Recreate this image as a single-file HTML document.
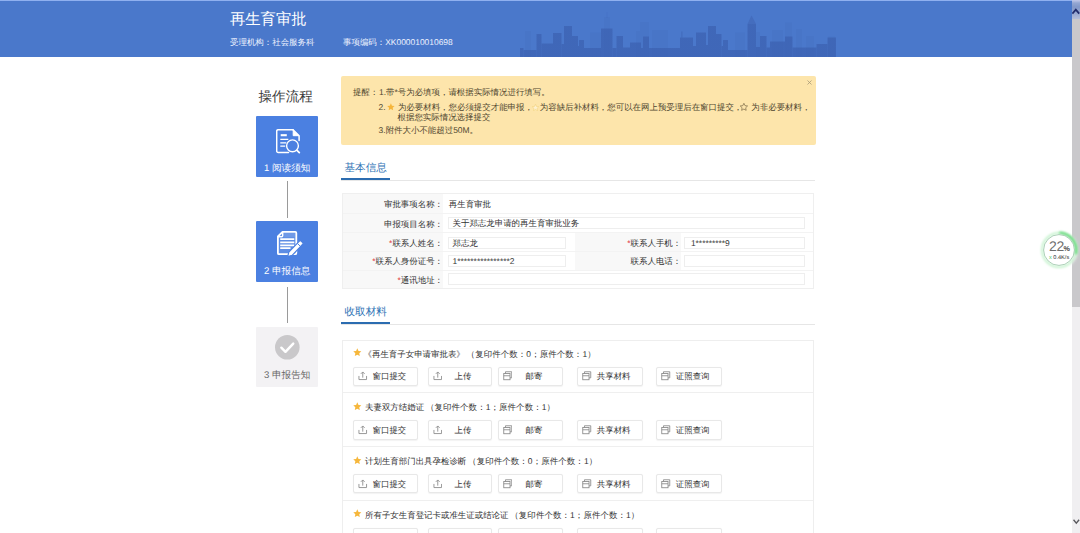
<!DOCTYPE html>
<html>
<head>
<meta charset="utf-8">
<title>再生育审批</title>
<style>
*{box-sizing:border-box;margin:0;padding:0}
html,body{width:1080px;height:533px;overflow:hidden;background:#fff}
body{position:relative;text-rendering:geometricPrecision;font-family:"Liberation Sans",sans-serif;color:#333;font-size:8.45px;line-height:10px}
.abs{position:absolute;white-space:nowrap}
/* header */
#hdr{position:absolute;left:0;top:0;width:1072px;height:57px;background:#4a78cb;border-top:1px solid #8fb0f0}
#hdr .t{position:absolute;left:230px;top:9px;font-size:15.3px;line-height:20px;color:#fff}
#hdr .s{position:absolute;top:34.5px;font-size:8.45px;line-height:12px;color:#eef3ff}
#sky{position:absolute;left:0;top:-1px}
/* scrollbar */
#sb{position:absolute;left:1072px;top:0;width:8px;height:533px;background:#f0eff1}
#sb .up{position:absolute;left:0;top:0;width:8px;height:18.5px;background:linear-gradient(#c3c9ea 0,#93a6d2 3px,#8197c8 7px,#96a7d0 13px,#b3bcd8 18.500px)}
#sb .th{position:absolute;left:0;top:18.5px;width:8px;height:288.5px;background:#c9c8cb}
/* steps */
.step{position:absolute;left:256.3px;width:61.7px;height:61.3px;background:#4b80e1;color:#fff;border-radius:1px}
.step .lb{position:absolute;left:0;width:61.7px;text-align:center;font-size:9.6px;line-height:12px;white-space:nowrap}
.step .ic{position:absolute}
.conn{position:absolute;left:287px;width:1px;background:#9a9a9a}
/* alert */
#al{position:absolute;left:341px;top:76px;width:475px;height:69px;background:#fde5ab;border-radius:2px;color:#4f452f}
#al .ln{position:absolute;white-space:nowrap;line-height:10px}
#al .st{display:inline-block;vertical-align:-1.2px}
/* section titles */
.sec{position:absolute;left:344.5px;font-size:10.6px;line-height:14px;color:#2f73b5;white-space:nowrap}
.ul{position:absolute;left:341px;width:48.5px;height:2.5px;background:#2b6cb0}
.gl{position:absolute;left:341px;width:474px;height:1px;background:#e6e6e6}
/* form */
#fm{position:absolute;left:342px;top:193px;width:472px;height:96px;border:1px solid #efefef;background:#fff}
.lc{position:absolute;background:#f8f8f8}
.lab{position:absolute;text-align:right;white-space:nowrap;color:#333}
.lab i{color:#e03030;font-style:normal}
.inp{position:absolute;height:12.2px;border:1px solid #eeeeee;background:#fff;padding-left:4px;line-height:10px;white-space:nowrap;color:#333}
.hl{position:absolute;left:0;height:1px;background:#f3f3f3}
/* materials */
#mt{position:absolute;left:342px;top:339.5px;width:472px;height:200px;border:1px solid #eeeeee;border-bottom:0;background:#fff}
.mi{position:absolute;left:0;width:470px;height:52.7px;border-bottom:1px solid #efefef}
.mi .ms{position:absolute;left:10px;top:7.6px}
.mi .tt{position:absolute;top:7.1px;line-height:12px;white-space:nowrap;color:#333}
.mi .pc{letter-spacing:.1px;margin-left:-.5px}
.btn{position:absolute;top:26.2px;height:19.1px;border:1px solid #e8e8e8;border-radius:2px;background:#fff;box-shadow:0 .5px 1px rgba(0,0,0,.05)}
.btn span{position:absolute;top:3.6px;line-height:10px;white-space:nowrap;color:#333}
.btn svg{position:absolute;top:3.8px}
/* widget */
#wg{position:absolute;left:1036.800px;top:228px;width:44px;height:44px}
#wg .n{position:absolute;left:12.100px;top:10.900px;font-size:14px;line-height:14px;color:#6e6e6e;letter-spacing:-.3px}
#wg .p{position:absolute;left:26.800px;top:16.700px;font-size:7.200px;line-height:8px;color:#444;font-weight:bold}
#wg .k{position:absolute;left:12.200px;top:27.300px;font-size:5.600px;line-height:6px;color:#333;white-space:nowrap}
</style>
</head>
<body>
<div id="hdr">
  <svg id="sky" width="1072" height="57" viewBox="0 0 1072 57"><defs><linearGradient id="sg" x1="0" y1="0" x2="0" y2="1" gradientUnits="userSpaceOnUse"><stop offset=".4" stop-color="#3f67b8" stop-opacity=".3"/><stop offset="1" stop-color="#3b60b0" stop-opacity=".7"/></linearGradient></defs><rect x="525" y="31" width="6" height="26" fill="#3a5fb0" fill-opacity=".12"/><rect x="590" y="32.5" width="11" height="24.5" fill="#3a5fb0" fill-opacity=".12"/><rect x="604" y="17" width="6" height="40" fill="#3a5fb0" fill-opacity=".12"/><rect x="636" y="31" width="4" height="26" fill="#3a5fb0" fill-opacity=".12"/><rect x="640" y="22" width="9" height="35" fill="#3a5fb0" fill-opacity=".12"/><rect x="652" y="30" width="16" height="27" fill="#3a5fb0" fill-opacity=".12"/><rect x="735" y="32.5" width="10" height="24.5" fill="#3a5fb0" fill-opacity=".12"/><rect x="756" y="32" width="4" height="25" fill="#3a5fb0" fill-opacity=".12"/><rect x="772" y="30" width="11" height="27" fill="#3a5fb0" fill-opacity=".12"/><rect x="785" y="22.5" width="7" height="34.5" fill="#3a5fb0" fill-opacity=".12"/><rect x="796" y="29" width="6" height="28" fill="#3a5fb0" fill-opacity=".12"/><rect x="806" y="36" width="8" height="21" fill="#3a5fb0" fill-opacity=".12"/><rect x="828" y="36.5" width="7" height="20.5" fill="#3a5fb0" fill-opacity=".12"/><rect x="520" y="48" width="3.5" height="9" fill="url(#sg)"/><rect x="523.5" y="50" width="13.0" height="7" fill="url(#sg)"/><rect x="536.5" y="34" width="5.0" height="23" fill="url(#sg)"/><rect x="541.5" y="43.5" width="11.5" height="13.5" fill="url(#sg)"/><rect x="553" y="33" width="8.5" height="24" fill="url(#sg)"/><rect x="561.5" y="44" width="2.5" height="13" fill="url(#sg)"/><rect x="564" y="26" width="8" height="31" fill="url(#sg)"/><rect x="572" y="36" width="6" height="21" fill="url(#sg)"/><rect x="578" y="46" width="1" height="11" fill="url(#sg)"/><rect x="579" y="40" width="5" height="17" fill="url(#sg)"/><rect x="584" y="48" width="17" height="9" fill="url(#sg)"/><rect x="601" y="28.5" width="11.5" height="28.5" fill="url(#sg)"/><rect x="612.5" y="48" width="4.0" height="9" fill="url(#sg)"/><rect x="616.5" y="36" width="6.5" height="21" fill="url(#sg)"/><rect x="623" y="47.5" width="7" height="9.5" fill="url(#sg)"/><rect x="630" y="42.5" width="11" height="14.5" fill="url(#sg)"/><rect x="641" y="48" width="2" height="9" fill="url(#sg)"/><rect x="643" y="36.5" width="6" height="20.5" fill="url(#sg)"/><rect x="649" y="48" width="31" height="9" fill="url(#sg)"/><rect x="680" y="37.5" width="13" height="19.5" fill="url(#sg)"/><rect x="693" y="46" width="3" height="11" fill="url(#sg)"/><rect x="696" y="32.5" width="10" height="24.5" fill="url(#sg)"/><rect x="706" y="45" width="2" height="12" fill="url(#sg)"/><rect x="708" y="26" width="8" height="31" fill="url(#sg)"/><rect x="716" y="34" width="5.5" height="23" fill="url(#sg)"/><rect x="721.5" y="46" width="1.5" height="11" fill="url(#sg)"/><rect x="723" y="40" width="5" height="17" fill="url(#sg)"/><rect x="728" y="50" width="19.5" height="7" fill="url(#sg)"/><rect x="747.5" y="24" width="8.5" height="33" fill="url(#sg)"/><rect x="756" y="47" width="4" height="10" fill="url(#sg)"/><rect x="760" y="36" width="6.5" height="21" fill="url(#sg)"/><rect x="766.5" y="47.5" width="3.5" height="9.5" fill="url(#sg)"/><rect x="770" y="41.5" width="15" height="15.5" fill="url(#sg)"/><rect x="785" y="36.5" width="7.5" height="20.5" fill="url(#sg)"/><rect x="792.5" y="47.5" width="24.0" height="9.5" fill="url(#sg)"/><rect x="816.5" y="44" width="11.0" height="13" fill="url(#sg)"/><rect x="827.5" y="37.5" width="8.5" height="19.5" fill="url(#sg)"/><polygon points="747.5,24 751.5,15.5 756,24" fill="#3d62b2" fill-opacity=".5"/><rect x="681.3" y="31.5" width="1.2" height="6" fill="#3d62b2" fill-opacity=".5"/><rect x="606.5" y="12" width="1" height="6" fill="#3a5fb0" fill-opacity=".16"/></svg>
  <div class="t">再生育审批</div>
  <div class="s" style="left:230px">受理机构：社会服务科</div>
  <div class="s" style="left:343px">事项编码：XK000010010698</div>
</div>
<div id="sb"><div class="up"></div><div class="th"></div>
<svg class="abs" style="left:.3px;top:7.500px" width="8" height="7" viewBox="0 0 8 7"><path d="M.4 5.600l3.400-4 3.400 4" fill="none" stroke="#222c6c" stroke-width="1.700"/></svg>
<svg class="abs" style="left:.8px;top:519.300px" width="7" height="6" viewBox="0 0 7 6"><path d="M.5 .8l2.800 3.300 2.800-3.300" fill="none" stroke="#5a5a5e" stroke-width="1.400"/></svg>
</div>

<div class="abs" style="left:258.5px;top:86.5px;font-size:13.6px;line-height:20px;color:#3a3a3a">操作流程</div>
<div class="step" style="top:116px"><svg class="ic" style="left:19.7px;top:13px" width="25" height="25" viewBox="0 0 25 25" fill="none" stroke="#fff" stroke-linecap="round" stroke-linejoin="round"><path d="M17 .7H2.200A1.500 1.500 0 0 0 .7 2.200V21.900A1.500 1.500 0 0 0 2.200 23.400H12.500" stroke-width="1.500"/><path d="M17 .7L23.100 6.900V11.500" stroke-width="1.500"/><path d="M17.200 1.400V6.700H22.500z" fill="#fff" stroke-width="1"/><path d="M4.700 6.200H10.800" stroke-width="2.100" stroke-linecap="butt"/><path d="M4.300 10.400H12.300M4.300 13.900H10.300M4.300 17.200H9.200" stroke-width="1.200" stroke-linecap="butt"/><circle cx="16.500" cy="16.800" r="5.900" fill="#4b80e1" stroke-width="1.400"/><path d="M21 21.300L23.300 23.600" stroke-width="1.800"/></svg><div class="lb" style="top:46.6px">1 阅读须知</div></div>
<div class="conn" style="top:181px;height:37px"></div>
<div class="step" style="top:221.3px;height:60.8px"><svg class="ic" style="left:20.7px;top:9.700px" width="27" height="28" viewBox="0 0 27 28" stroke-linejoin="round"><path d="M5.500 .9H18.300a1 1 0 0 1 1 1V22.200a1 1 0 0 1-1 1H1.900a1 1 0 0 1-1-1V5.500z" fill="#fff" fill-opacity=".1" stroke="#fff" stroke-width="1.800"/><path d="M5.700 1V4.700a1 1 0 0 1-1 1H1" fill="none" stroke="#fff" stroke-width="1.500"/><path d="M7.200 2H18V6.300H7.200z" fill="#fff" fill-opacity=".12"/><path d="M3.200 8.200H17.300M3.200 11.300H17.300M3.200 14.300H17.300M3.200 17.200H13.500" stroke="#fff" stroke-width="1.700" fill="none"/><g transform="translate(10.700,25.600) rotate(-46.200)"><path d="M0 0L4-2.300H19.300a1.200 1.200 0 0 1 1.200 1.200V1.100a1.200 1.200 0 0 1-1.200 1.200H4z" fill="#fff" stroke="#4b80e1" stroke-width="1.200"/><path d="M16.200-2.300V2.300" stroke="#4b80e1" stroke-width=".9"/></g></svg><div class="lb" style="top:44.8px">2 申报信息</div></div>
<div class="conn" style="top:286.5px;height:36px"></div>
<div class="step" style="top:326.8px;height:60.5px;background:#f3f2f4;color:#666"><svg class="ic" style="left:18.7px;top:8.5px" width="24.6" height="24.6" viewBox="0 0 24 24"><circle cx="12" cy="12" r="12" fill="#c9c8ca"/><path d="M6.2 12.4l4 4 7.6-8" fill="none" stroke="#fff" stroke-width="2.4" stroke-linecap="round" stroke-linejoin="round"/></svg><div class="lb" style="top:43.7px">3 申报告知</div></div>

<div id="al">
<div class="ln" style="left:12px;top:11.3px">提醒：</div>
<div class="ln" style="left:38px;top:11.3px">1.带*号为必填项，请根据实际情况进行填写。</div>
<div class="ln" style="left:37.6px;top:25.6px">2.<svg class="st" style="margin:0 3.3px 0 1.2px" width="7.8" height="7.8" viewBox="0 0 10 10"><polygon points="5,0.4 6.4,3.4 9.7,3.8 7.3,6.1 7.9,9.4 5,7.8 2.1,9.4 2.7,6.1 0.3,3.8 3.6,3.4" fill="#f5b53a" stroke="none" stroke-width=".8" stroke-linejoin="round"/></svg>为必要材料，您必须提交才能申报，<svg class="st" style="margin:0 .85px 0 -1px" width="7" height="7" viewBox="0 0 10 10"><polygon points="5,0.4 6.4,3.4 9.7,3.8 7.3,6.1 7.9,9.4 5,7.8 2.1,9.4 2.7,6.1 0.3,3.8 3.6,3.4" fill="#fdf0cf" stroke="#f3d27a" stroke-width=".8" stroke-linejoin="round"/></svg>为容缺后补材料，您可以在网上预受理后在窗口提交，<svg class="st" style="margin:0 3.3px 0 -2px" width="7.8" height="7.8" viewBox="0 0 10 10"><polygon points="5,0.4 6.4,3.4 9.7,3.8 7.3,6.1 7.9,9.4 5,7.8 2.1,9.4 2.7,6.1 0.3,3.8 3.6,3.4" fill="none" stroke="#6a5a3a" stroke-width=".8" stroke-linejoin="round"/></svg>为非必要材料，</div>
<div class="ln" style="left:56.5px;top:35.6px">根据您实际情况选择提交</div>
<div class="ln" style="left:37.6px;top:49.4px">3.附件大小不能超过50M。</div>
<svg class="abs" style="left:465.5px;top:4px" width="5" height="5" viewBox="0 0 5 5"><path d="M.5 .5l4 4M4.500 .5l-4 4" stroke="#a89a78" stroke-width=".8" fill="none"/></svg>
</div>

<div class="sec" style="top:160.7px">基本信息</div>
<div class="gl" style="top:180px"></div>
<div class="ul" style="top:177.5px"></div>
<div id="fm">
<div class="lc" style="left:0px;top:0px;width:99.5px;height:94px"></div>
<div class="lc" style="left:231.5px;top:38.5px;width:106.7px;height:38.7px"></div>
<div class="hl" style="top:18.8px;width:470px"></div>
<div class="hl" style="top:38px;width:470px"></div>
<div class="hl" style="top:57px;width:470px"></div>
<div class="hl" style="top:76px;width:470px"></div>
<div class="lab" style="left:0;width:100px;top:4.55px">审批事项名称：</div>
<div class="lab" style="left:0;width:100px;top:24.55px">申报项目名称：</div>
<div class="lab" style="left:0;width:100px;top:43.8px"><i>*</i>联系人姓名：</div>
<div class="lab" style="left:0;width:100px;top:61.55px"><i>*</i>联系人身份证号：</div>
<div class="lab" style="left:0;width:100px;top:80.8px"><i>*</i>通讯地址：</div>
<div class="lab" style="left:231.5px;width:106.70000000000005px;top:43.8px"><i>*</i>联系人手机：</div>
<div class="lab" style="left:231.5px;width:106.70000000000005px;top:61.55px">联系人电话：</div>
<div class="abs" style="left:105.75px;top:4.55px">再生育审批</div>
<div class="inp" style="left:104.5px;top:23.3px;width:357.5px">关于郑志龙申请的再生育审批业务</div>
<div class="inp" style="left:104.5px;top:43.0px;width:118.8px">郑志龙</div>
<div class="inp" style="left:341.2px;top:43.0px;width:120.8px"><span class="m" style="margin-left:1.7px">1*********9</span></div>
<div class="inp" style="left:104.5px;top:60.9px;width:118.8px"><span class="m">1****************2</span></div>
<div class="inp" style="left:341.2px;top:60.9px;width:120.8px"></div>
<div class="inp" style="left:104.5px;top:79.3px;width:357.5px"></div>
</div>

<div class="sec" style="top:305.4px">收取材料</div>
<div class="gl" style="top:324px"></div>
<div class="ul" style="top:321.5px"></div>
<div id="mt">
<div class="mi" style="top:0.0px">
<svg class="ms" style="" width="8.6" height="8.6" viewBox="0 0 10 10"><polygon points="5,0.4 6.4,3.4 9.7,3.8 7.3,6.1 7.9,9.4 5,7.8 2.1,9.4 2.7,6.1 0.3,3.8 3.6,3.4" fill="#f6b73c" stroke="none" stroke-width=".8" stroke-linejoin="round"/></svg>
<div class="tt" style="left:20.5px">《再生育子女申请审批表》 <span class="pc">（复印件个数：0；原件个数：1）</span></div>
<div class="btn" style="left:10px;width:65.25px"><svg style="left:4.3px" width="9.5" height="9.5" viewBox="0 0 10 10" fill="none" stroke="#888" stroke-width=".9"><path d="M1 5.2V9h8V5.2"/><path d="M5 7V1.2M3 3l2-2 2 2"/></svg><span style="left:18.5px">窗口提交</span></div>
<div class="btn" style="left:84.5px;width:64.25px"><svg style="left:4.3px" width="9.5" height="9.5" viewBox="0 0 10 10" fill="none" stroke="#888" stroke-width=".9"><path d="M1 5.2V9h8V5.2"/><path d="M5 7V1.2M3 3l2-2 2 2"/></svg><span style="left:26.0px">上传</span></div>
<div class="btn" style="left:154.5px;width:65.0px"><svg style="left:4.2px" width="9.5" height="9.5" viewBox="0 0 10 10" fill="none" stroke="#888" stroke-width=".9"><path d="M2.6 2.6V.8h6.6v6.4H7.4"/><rect x=".8" y="2.6" width="6.6" height="6.6"/><path d="M.8 5h6.6"/></svg><span style="left:27.0px">邮寄</span></div>
<div class="btn" style="left:234px;width:65.5px"><svg style="left:4.2px" width="9.5" height="9.5" viewBox="0 0 10 10" fill="none" stroke="#888" stroke-width=".9"><path d="M2.6 2.6V.8h6.6v6.4H7.4"/><rect x=".8" y="2.6" width="6.6" height="6.6"/><path d="M.8 5h6.6"/></svg><span style="left:18.75px">共享材料</span></div>
<div class="btn" style="left:313.25px;width:65.5px"><svg style="left:4.2px" width="9.5" height="9.5" viewBox="0 0 10 10" fill="none" stroke="#888" stroke-width=".9"><path d="M2.6 2.6V.8h6.6v6.4H7.4"/><rect x=".8" y="2.6" width="6.6" height="6.6"/><path d="M.8 5h6.6"/></svg><span style="left:18.5px">证照查询</span></div>
</div>
<div class="mi" style="top:53.8px">
<svg class="ms" style="" width="8.6" height="8.6" viewBox="0 0 10 10"><polygon points="5,0.4 6.4,3.4 9.7,3.8 7.3,6.1 7.9,9.4 5,7.8 2.1,9.4 2.7,6.1 0.3,3.8 3.6,3.4" fill="#f6b73c" stroke="none" stroke-width=".8" stroke-linejoin="round"/></svg>
<div class="tt" style="left:22px">夫妻双方结婚证 <span class="pc">（复印件个数：1；原件个数：1）</span></div>
<div class="btn" style="left:10px;width:65.25px"><svg style="left:4.3px" width="9.5" height="9.5" viewBox="0 0 10 10" fill="none" stroke="#888" stroke-width=".9"><path d="M1 5.2V9h8V5.2"/><path d="M5 7V1.2M3 3l2-2 2 2"/></svg><span style="left:18.5px">窗口提交</span></div>
<div class="btn" style="left:84.5px;width:64.25px"><svg style="left:4.3px" width="9.5" height="9.5" viewBox="0 0 10 10" fill="none" stroke="#888" stroke-width=".9"><path d="M1 5.2V9h8V5.2"/><path d="M5 7V1.2M3 3l2-2 2 2"/></svg><span style="left:26.0px">上传</span></div>
<div class="btn" style="left:154.5px;width:65.0px"><svg style="left:4.2px" width="9.5" height="9.5" viewBox="0 0 10 10" fill="none" stroke="#888" stroke-width=".9"><path d="M2.6 2.6V.8h6.6v6.4H7.4"/><rect x=".8" y="2.6" width="6.6" height="6.6"/><path d="M.8 5h6.6"/></svg><span style="left:27.0px">邮寄</span></div>
<div class="btn" style="left:234px;width:65.5px"><svg style="left:4.2px" width="9.5" height="9.5" viewBox="0 0 10 10" fill="none" stroke="#888" stroke-width=".9"><path d="M2.6 2.6V.8h6.6v6.4H7.4"/><rect x=".8" y="2.6" width="6.6" height="6.6"/><path d="M.8 5h6.6"/></svg><span style="left:18.75px">共享材料</span></div>
<div class="btn" style="left:313.25px;width:65.5px"><svg style="left:4.2px" width="9.5" height="9.5" viewBox="0 0 10 10" fill="none" stroke="#888" stroke-width=".9"><path d="M2.6 2.6V.8h6.6v6.4H7.4"/><rect x=".8" y="2.6" width="6.6" height="6.6"/><path d="M.8 5h6.6"/></svg><span style="left:18.5px">证照查询</span></div>
</div>
<div class="mi" style="top:107.6px">
<svg class="ms" style="" width="8.6" height="8.6" viewBox="0 0 10 10"><polygon points="5,0.4 6.4,3.4 9.7,3.8 7.3,6.1 7.9,9.4 5,7.8 2.1,9.4 2.7,6.1 0.3,3.8 3.6,3.4" fill="#f6b73c" stroke="none" stroke-width=".8" stroke-linejoin="round"/></svg>
<div class="tt" style="left:22px">计划生育部门出具孕检诊断 <span class="pc">（复印件个数：0；原件个数：1）</span></div>
<div class="btn" style="left:10px;width:65.25px"><svg style="left:4.3px" width="9.5" height="9.5" viewBox="0 0 10 10" fill="none" stroke="#888" stroke-width=".9"><path d="M1 5.2V9h8V5.2"/><path d="M5 7V1.2M3 3l2-2 2 2"/></svg><span style="left:18.5px">窗口提交</span></div>
<div class="btn" style="left:84.5px;width:64.25px"><svg style="left:4.3px" width="9.5" height="9.5" viewBox="0 0 10 10" fill="none" stroke="#888" stroke-width=".9"><path d="M1 5.2V9h8V5.2"/><path d="M5 7V1.2M3 3l2-2 2 2"/></svg><span style="left:26.0px">上传</span></div>
<div class="btn" style="left:154.5px;width:65.0px"><svg style="left:4.2px" width="9.5" height="9.5" viewBox="0 0 10 10" fill="none" stroke="#888" stroke-width=".9"><path d="M2.6 2.6V.8h6.6v6.4H7.4"/><rect x=".8" y="2.6" width="6.6" height="6.6"/><path d="M.8 5h6.6"/></svg><span style="left:27.0px">邮寄</span></div>
<div class="btn" style="left:234px;width:65.5px"><svg style="left:4.2px" width="9.5" height="9.5" viewBox="0 0 10 10" fill="none" stroke="#888" stroke-width=".9"><path d="M2.6 2.6V.8h6.6v6.4H7.4"/><rect x=".8" y="2.6" width="6.6" height="6.6"/><path d="M.8 5h6.6"/></svg><span style="left:18.75px">共享材料</span></div>
<div class="btn" style="left:313.25px;width:65.5px"><svg style="left:4.2px" width="9.5" height="9.5" viewBox="0 0 10 10" fill="none" stroke="#888" stroke-width=".9"><path d="M2.6 2.6V.8h6.6v6.4H7.4"/><rect x=".8" y="2.6" width="6.6" height="6.6"/><path d="M.8 5h6.6"/></svg><span style="left:18.5px">证照查询</span></div>
</div>
<div class="mi" style="top:161.4px">
<svg class="ms" style="" width="8.6" height="8.6" viewBox="0 0 10 10"><polygon points="5,0.4 6.4,3.4 9.7,3.8 7.3,6.1 7.9,9.4 5,7.8 2.1,9.4 2.7,6.1 0.3,3.8 3.6,3.4" fill="#f6b73c" stroke="none" stroke-width=".8" stroke-linejoin="round"/></svg>
<div class="tt" style="left:22px">所有子女生育登记卡或准生证或结论证 <span class="pc">（复印件个数：1；原件个数：1）</span></div>
<div class="btn" style="left:10px;width:65.25px"><svg style="left:4.3px" width="9.5" height="9.5" viewBox="0 0 10 10" fill="none" stroke="#888" stroke-width=".9"><path d="M1 5.2V9h8V5.2"/><path d="M5 7V1.2M3 3l2-2 2 2"/></svg><span style="left:18.5px">窗口提交</span></div>
<div class="btn" style="left:84.5px;width:64.25px"><svg style="left:4.3px" width="9.5" height="9.5" viewBox="0 0 10 10" fill="none" stroke="#888" stroke-width=".9"><path d="M1 5.2V9h8V5.2"/><path d="M5 7V1.2M3 3l2-2 2 2"/></svg><span style="left:26.0px">上传</span></div>
<div class="btn" style="left:154.5px;width:65.0px"><svg style="left:4.2px" width="9.5" height="9.5" viewBox="0 0 10 10" fill="none" stroke="#888" stroke-width=".9"><path d="M2.6 2.6V.8h6.6v6.4H7.4"/><rect x=".8" y="2.6" width="6.6" height="6.6"/><path d="M.8 5h6.6"/></svg><span style="left:27.0px">邮寄</span></div>
<div class="btn" style="left:234px;width:65.5px"><svg style="left:4.2px" width="9.5" height="9.5" viewBox="0 0 10 10" fill="none" stroke="#888" stroke-width=".9"><path d="M2.6 2.6V.8h6.6v6.4H7.4"/><rect x=".8" y="2.6" width="6.6" height="6.6"/><path d="M.8 5h6.6"/></svg><span style="left:18.75px">共享材料</span></div>
<div class="btn" style="left:313.25px;width:65.5px"><svg style="left:4.2px" width="9.5" height="9.5" viewBox="0 0 10 10" fill="none" stroke="#888" stroke-width=".9"><path d="M2.6 2.6V.8h6.6v6.4H7.4"/><rect x=".8" y="2.6" width="6.6" height="6.6"/><path d="M.8 5h6.6"/></svg><span style="left:18.5px">证照查询</span></div>
</div>
</div>

<div id="wg">
<svg class="abs" style="left:0;top:0" width="44" height="44" viewBox="0 0 44 44"><defs><filter id="gb" x="-30%" y="-30%" width="160%" height="160%"><feGaussianBlur stdDeviation="1"/></filter><filter id="gc" x="-30%" y="-30%" width="160%" height="160%"><feGaussianBlur stdDeviation="1.600"/></filter></defs>
<circle cx="22" cy="22" r="18.500" fill="#fff" fill-opacity=".85" filter="url(#gc)"/>
<circle cx="22" cy="22" r="17" fill="none" stroke="#c4f2cc" stroke-width="2" filter="url(#gb)"/>
<path d="M23.500 4.800A17.300 17.300 0 0 1 39 25" fill="none" stroke="#6fdb84" stroke-width="2.800" stroke-linecap="round" filter="url(#gb)"/>
<circle cx="22" cy="22" r="15.400" fill="#fff" stroke="#8dbc9c" stroke-width=".7"/></svg>
<div class="n">22</div><div class="p">%</div><div class="k"><span style="color:#4cbf60">x</span> 0.4K/s</div>
</div>
</body>
</html>
